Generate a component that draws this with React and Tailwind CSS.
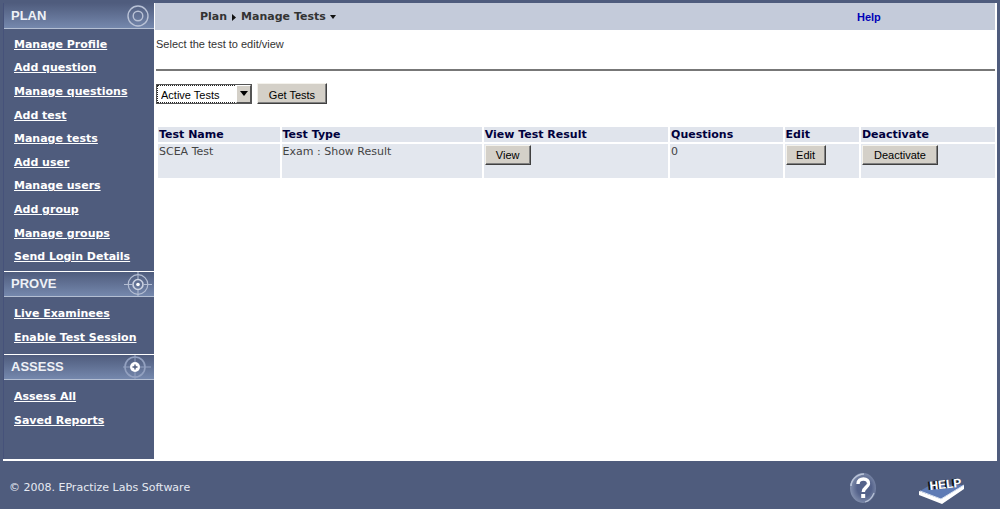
import React, { useState } from 'react';

const sections = [
  {
    title: 'PLAN',
    icon: 'ring',
    links: [
      'Manage Profile',
      'Add question',
      'Manage questions',
      'Add test',
      'Manage tests',
      'Add user',
      'Manage users',
      'Add group',
      'Manage groups',
      'Send Login Details',
    ],
  },
  { title: 'PROVE', icon: 'target', links: ['Live Examinees', 'Enable Test Session'] },
  { title: 'ASSESS', icon: 'hit', links: ['Assess All', 'Saved Reports'] },
];

const tests = [{ id: 1, name: 'SCEA Test', type: 'Exam : Show Result', questions: 0 }];

const SectionIcon = ({ type }) => {
  if (type === 'ring') {
    return (
      <svg width="30" height="24" viewBox="0 0 30 24" fill="none" stroke="#b9c2d6" aria-hidden="true">
        <circle cx="15" cy="12" r="10" strokeWidth="1.4" />
        <circle cx="15" cy="12" r="4.8" strokeWidth="1.4" />
      </svg>
    );
  }
  if (type === 'target') {
    return (
      <svg width="30" height="24" viewBox="0 0 30 24" fill="none" stroke="#b4bed3" aria-hidden="true">
        <circle cx="15" cy="12.5" r="9.8" strokeWidth="1.2" />
        <circle cx="15" cy="12.5" r="5" strokeWidth="1.6" stroke="#cbd2e1" />
        <path d="M1 12.5h8M21 12.5h8M15 0v7M15 18v6" />
        <circle cx="15" cy="12.5" r="1.8" fill="#fff" stroke="none" />
      </svg>
    );
  }
  return (
    <svg width="30" height="24" viewBox="0 0 30 24" fill="none" stroke="#93a1c0" aria-hidden="true">
      <circle cx="12" cy="12" r="10" strokeWidth="1.6" />
      <path d="M-2 12h9M17 12h11M12 0v7M12 17v7" />
      <circle cx="12" cy="12" r="5" fill="#fff" stroke="none" />
      <path d="M9.5 12h5M12 9.5v5" stroke="#4f5c7d" strokeWidth="1.4" />
    </svg>
  );
};

const QuestionIcon = () => (
  <svg width="28" height="32" viewBox="0 0 28 32" aria-hidden="true">
    <defs>
      <radialGradient id="orb" cx="0.55" cy="0.5" r="0.55">
        <stop offset="0.5" stopColor="#54628a" />
        <stop offset="1" stopColor="#8592b0" />
      </radialGradient>
    </defs>
    <ellipse cx="14" cy="16" rx="13" ry="15" fill="url(#orb)" />
    <path d="M2 14C2 8 8 2 15 2" fill="none" stroke="#b9c3d7" strokeWidth="1.6" />
    <path d="M25 21C23 26 20 29 16 30" fill="none" stroke="#b9c3d7" strokeWidth="1.2" />
    <path
      d="M9 12C9 8.5 11.5 7 14.5 7C17.500 7 19.8 9 19.5 11.8C19 15.5 14.3 15.5 14.3 20"
      fill="none"
      stroke="#fff"
      strokeWidth="3.4"
    />
    <rect x="12.2" y="22" width="4" height="4" fill="#fff" />
  </svg>
);

const BookIcon = () => (
  <svg width="46" height="32" viewBox="0 0 46 32" aria-hidden="true">
    <path d="M0 19L22 27L45 13V17L23 32L0 23Z" fill="#fff" />
    <path d="M1 19L13 12L45 13L22 27Z" fill="#5e7bb5" />
    <path d="M1 19L22 27L45 13" fill="none" stroke="#dce5f4" />
    <g fontFamily="'Liberation Sans', Arial, sans-serif" fontWeight="700" fontSize="12">
      <text x="9" y="18" fill="#111" transform="rotate(-6 9 18)">HELP</text>
      <text x="11" y="18" fill="#fff" transform="rotate(-6 11 18)">HELP</text>
    </g>
  </svg>
);

const buttonStyle =
  'border border-t-[#f4f2ec] border-l-[#f4f2ec] border-r-[#404040] border-b-[#404040] bg-[#d4d0c8] ' +
  "font-['Liberation_Sans',Arial,sans-serif] text-[11px] leading-4 text-black shadow-[inset_-1px_-1px_0_#808080]";

const Sidebar = () => (
  <nav className="w-[151px] shrink-0 border-l border-[#46527a]">
    {sections.map((section, index) => (
      <section key={section.title}>
        <div
          className={`flex h-[26px] items-center justify-between border-b border-[#b4bfd3] bg-linear-to-b from-[#4f5c7d] to-[#7588ad] pl-[7px] pr-px ${
            index > 0 ? 'border-t border-t-white' : ''
          }`}
        >
          <h2 className="font-['Liberation_Sans',Arial,sans-serif] text-[13px] font-bold text-[#eef1f6]">
            {section.title}
          </h2>
          <SectionIcon type={section.icon} />
        </div>
        <ul
          className={`flex flex-col justify-around text-[11px] font-bold leading-4 text-white ${
            index === 0 ? 'mt-1 mb-0.5 h-[236px]' : 'mt-[5px] mb-1 h-12'
          }`}
        >
          {section.links.map((link) => (
            <li key={link} className="pl-[10px]">
              <a href="#" className="whitespace-nowrap underline">
                {link}
              </a>
            </li>
          ))}
        </ul>
      </section>
    ))}
  </nav>
);

const TestTable = () => (
  <div className="mt-[21px] pl-px">
    <table className="w-full table-fixed border-separate border-spacing-[2px] text-left text-[11px] leading-[14px]">
      <colgroup>
        <col className="w-[14.7%]" />
        <col className="w-[24.2%]" />
        <col className="w-[22.3%]" />
        <col className="w-[13.6%]" />
        <col className="w-[9%]" />
        <col />
      </colgroup>
      <thead>
        <tr className="bg-[#e0e4ec] text-[#00003c]">
          {['Test Name', 'Test Type', 'View Test Result', 'Questions', 'Edit', 'Deactivate'].map((heading) => (
            <th key={heading} className="px-px pt-px font-bold">
              {heading}
            </th>
          ))}
        </tr>
      </thead>
      <tbody>
        {tests.map((test) => (
          <tr key={test.id} className="h-[34px] bg-[#e3e7ee] align-top text-[#444]">
            <td className="px-px pt-px">{test.name}</td>
            <td className="px-px pt-px">{test.type}</td>
            <td className="px-px pt-px">
              <button type="button" className={`${buttonStyle} h-5 w-[46px]`}>View</button>
            </td>
            <td className="px-px pt-px">{test.questions}</td>
            <td className="px-px pt-px">
              <button type="button" className={`${buttonStyle} h-5 w-10`}>Edit</button>
            </td>
            <td className="px-px pt-px">
              <button type="button" className={`${buttonStyle} h-5 w-[76px]`}>Deactivate</button>
            </td>
          </tr>
        ))}
      </tbody>
    </table>
  </div>
);

const App = () => {
  const [filter, setFilter] = useState('active');

  return (
    <div className="flex min-h-screen flex-col bg-[#4f5c7d] pt-[3px] pl-[3px] font-['DejaVu_Sans',Verdana,sans-serif]">
      <div className="mr-[3px] flex flex-1">
        <Sidebar />
        <main className="min-w-0 flex-1 border-l border-white bg-white">
          <header className="mr-[2px] flex h-[27px] items-center bg-[#c4cbda] pt-0.5 pl-[45px] text-[11px] font-bold text-[#333]">
            <span>Plan</span>
            <svg className="mx-[5px]" width="4" height="7" viewBox="0 0 4 7" aria-hidden="true">
              <path d="M0 0L4 3.5L0 7Z" fill="#111" />
            </svg>
            <span className="flex-1">
              Manage Tests
              <svg className="ml-1 inline" width="6" height="4" viewBox="0 0 6 4" aria-hidden="true">
                <path d="M0 0H6L3 4Z" fill="#111" />
              </svg>
            </span>
            <a href="#" className="w-[138px] font-['Liberation_Sans',Arial,sans-serif] text-[#0000b8]">
              Help
            </a>
          </header>
          <p className="mt-1.5 pl-px font-['Liberation_Sans',Arial,sans-serif] text-[11px] leading-4 text-[#333]">
            Select the test to edit/view
          </p>
          <hr className="mt-[17px] mr-[2px] ml-px border-t-2 border-t-[#777]" />
          <form className="mt-3 flex items-center gap-[5px] pl-px" onSubmit={(e) => e.preventDefault()}>
            <div className="relative">
              <select
                aria-label="Tests to show"
                value={filter}
                onChange={(e) => setFilter(e.target.value)}
                className="block h-5 w-24 appearance-none border border-[#555] bg-white pt-0.5 pl-1 font-['Liberation_Sans',Arial,sans-serif] text-[11px] text-black outline-1 -outline-offset-2 outline-dotted outline-[#222]"
              >
                <option value="active">Active Tests</option>
                <option value="inactive">Inactive Tests</option>
              </select>
              <span className="pointer-events-none absolute inset-y-px right-px flex w-[15px] items-center justify-center border border-t-white border-l-white border-r-[#555] border-b-[#555] bg-[#d4d0c8]">
                <svg width="8" height="5" viewBox="0 0 8 5" aria-hidden="true">
                  <path d="M0 0H8L4 5Z" fill="#000" />
                </svg>
              </span>
            </div>
            <button type="submit" className={`${buttonStyle} h-[21px] w-[70px] pt-0.5`}>Get Tests</button>
          </form>
          <TestTable />
        </main>
      </div>
      <footer className="mr-[3px] flex h-[50px] items-center justify-between border-t-2 border-white pt-1.5 pl-1.5 text-[11px] text-[#e6eaf2]">
        <span>© 2008. EPractize Labs Software</span>
        <div className="flex items-center gap-[42px] pr-[32px]">
          <a href="#" aria-label="Questions"><QuestionIcon /></a>
          <a href="#" aria-label="Help"><BookIcon /></a>
        </div>
      </footer>
    </div>
  );
};

export default App;
